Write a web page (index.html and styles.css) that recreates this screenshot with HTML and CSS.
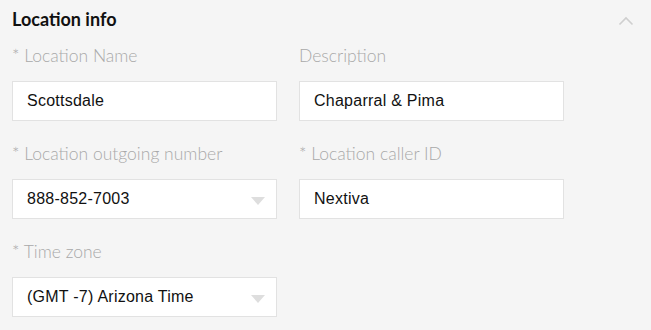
FILE: index.html
```html
<!DOCTYPE html>
<html>
<head>
<meta charset="utf-8">
<link rel="stylesheet" href="styles.css">
</head>
<body>
<section class="panel">
  <header class="panel-header">
    <h2 class="panel-title">Location info</h2>
    <svg class="collapse-icon" width="16" height="10" viewBox="0 0 16 10"><path d="M1.5 8.5 L8 2 L14.5 8.5" fill="none" stroke="#cfcfcf" stroke-width="1.6"/></svg>
  </header>
  <div class="fields">
    <div class="field">
      <div class="label">* Location Name</div>
      <div class="box">Scottsdale</div>
    </div>
    <div class="field">
      <div class="label">Description</div>
      <div class="box">Chaparral &amp; Pima</div>
    </div>
    <div class="field">
      <div class="label">* Location outgoing number</div>
      <div class="box select">888-852-7003<span class="caret"></span></div>
    </div>
    <div class="field">
      <div class="label">* Location caller ID</div>
      <div class="box">Nextiva</div>
    </div>
    <div class="field">
      <div class="label">* Time zone</div>
      <div class="box select">(GMT -7) Arizona Time<span class="caret"></span></div>
    </div>
  </div>
</section>
</body>
</html>
```
FILE: styles.css
```css
html, body {
  margin: 0;
  padding: 0;
  background: #f5f5f5;
}
.panel {
  padding: 7px 12px 0 12px;
  font-family: Lato, "Liberation Sans", sans-serif;
}
.panel-header {
  display: flex;
  justify-content: space-between;
  align-items: center;
  height: 24px;
  margin-bottom: 13px;
}
.panel-title {
  margin: 0;
  font-size: 18px;
  font-weight: 700;
  line-height: 24px;
  color: #111;
}
.collapse-icon {
  margin-right: 5px;
  margin-top: 4px;
}
.fields {
  display: grid;
  grid-template-columns: 265px 265px;
  column-gap: 22px;
  row-gap: 21px;
}
.label {
  font-size: 17.5px;
  font-weight: 300;
  line-height: 24px;
  color: #a9a9a9;
  margin-bottom: 13px;
}
.box {
  box-sizing: border-box;
  height: 40px;
  background: #fff;
  border: 1px solid #e2e2e2;
  padding: 0 14px;
  display: flex;
  align-items: center;
  font-family: "Liberation Sans", Arial, sans-serif;
  font-size: 16px;
  letter-spacing: 0.25px;
  color: #111;
}
.select {
  justify-content: space-between;
  padding-right: 11px;
}
.caret {
  width: 0;
  height: 0;
  border-left: 7px solid transparent;
  border-right: 7px solid transparent;
  border-top: 8px solid #dedede;
  margin-top: 3px;
}
```
